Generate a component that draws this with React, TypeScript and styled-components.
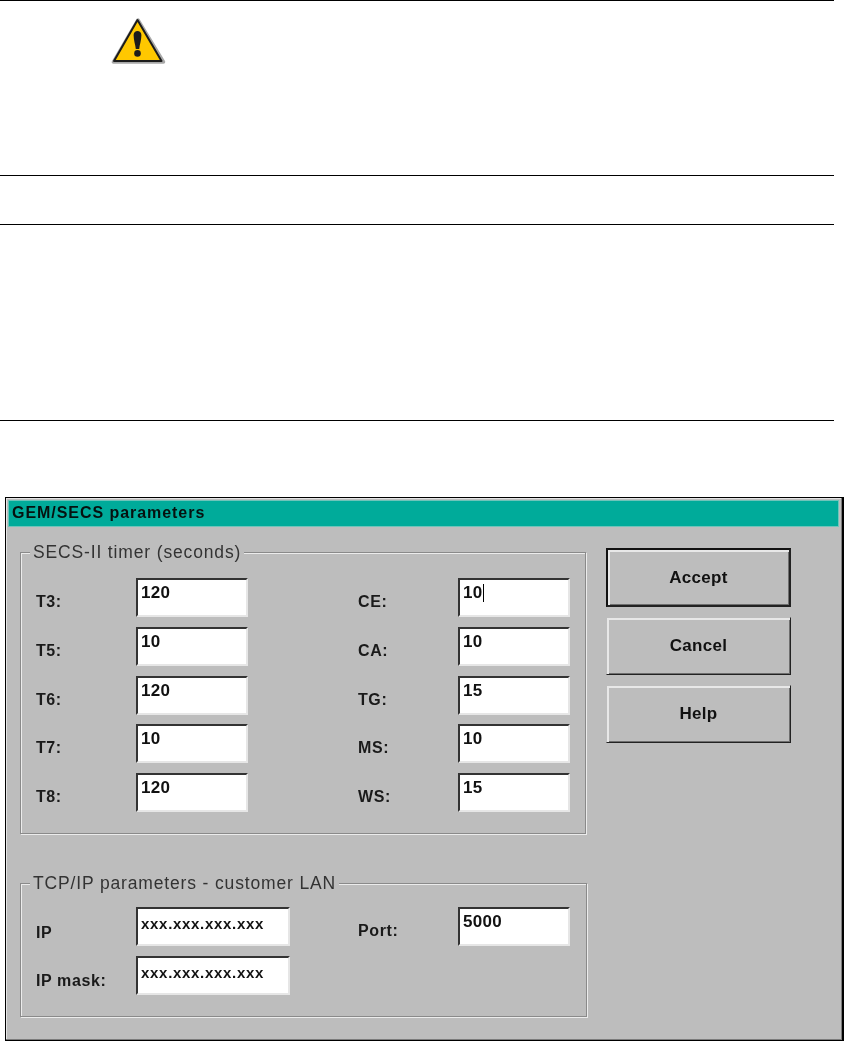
import React from 'react';
import styled, { createGlobalStyle } from 'styled-components';

const Global = createGlobalStyle`
  html, body { margin: 0; padding: 0; background: #fff; }
  body { width: 851px; height: 1041px; overflow: hidden; font-family: "Liberation Sans", Arial, sans-serif; }
`;

const Page = styled.div`
  width: 851px;
  height: 1041px;
  display: flex;
  flex-direction: column;
`;

const Section = styled.div<{ $h: number }>`
  box-sizing: border-box;
  width: 834px;
  height: ${p => p.$h}px;
  border-top: 1px solid #000;
`;

const WarningSection = styled(Section)`
  padding: 14px 0 0 110px;
`;

const DialogWrap = styled.div`
  padding-left: 5px;
`;

const Dialog = styled.div`
  box-sizing: border-box;
  width: 839px;
  height: 544px;
  border: 1px solid #000;
  border-right-width: 2px;
  padding: 2px 3px 2px 2px;
  background: #bdbdbd;
  box-shadow: inset -1px -1px 0 #7b7b7b, inset 1px 1px 0 #e4e4e4;
  color: #111;
  filter: blur(0.35px);
`;

const TitleBar = styled.div`
  box-sizing: border-box;
  height: 27px;
  background: #00ab9a;
  border: 1px solid #6fc4ba;
  padding-left: 3px;
  font-size: 16px;
  font-weight: 700;
  line-height: 24px;
  letter-spacing: 0.95px;
  color: #06110f;
  white-space: nowrap;
`;

const Body = styled.div`
  display: flex;
  gap: 19px;
  padding: 21px 0 0 12px;
`;

const Groups = styled.div`
  display: flex;
  flex-direction: column;
  gap: 49px;
  padding-top: 4px;
`;

const Group = styled.div<{ $w: number; $h: number; $top: number; $gap: number }>`
  position: relative;
  box-sizing: border-box;
  width: ${p => p.$w}px;
  height: ${p => p.$h}px;
  border: 1px solid #8a8a8a;
  box-shadow: 1px 1px 0 #ececec, inset 1px 1px 0 #ececec;
  padding: ${p => p.$top}px 0 0 15px;
  display: flex;
  gap: ${p => p.$gap}px;
`;

const Legend = styled.div`
  position: absolute;
  top: -13px;
  left: 9px;
  padding: 0 3px;
  background: #bdbdbd;
  font-size: 17.5px;
  line-height: 24px;
  letter-spacing: 0.85px;
  color: #333;
  white-space: nowrap;
`;

const Column = styled.div`
  display: flex;
  flex-direction: column;
  gap: 9.75px;
`;

const Field = styled.div`
  display: flex;
  height: 39px;
`;

const Label = styled.div<{ $pt?: number }>`
  width: 100px;
  padding-top: ${p => p.$pt ?? 15}px;
  font-size: 16px;
  font-weight: 700;
  line-height: 18px;
  letter-spacing: 0.6px;
  color: #1a1a1a;
  white-space: nowrap;
`;

const Input = styled.div<{ $w?: number }>`
  box-sizing: border-box;
  width: ${p => p.$w ?? 112}px;
  height: 39px;
  background: #fff;
  border-style: solid;
  border-width: 2px;
  border-color: #333 #e6e6e6 #e6e6e6 #333;
  padding: 4px 0 0 3px;
  font-size: 17px;
  font-weight: 700;
  line-height: 18px;
  letter-spacing: 0.3px;
  color: #111;
  white-space: nowrap;
`;

const Masked = styled.span`
  display: inline-block;
  padding-top: 2px;
  font-size: 15px;
  letter-spacing: 0.7px;
`;

const Caret = styled.span`
  display: inline-block;
  width: 1px;
  height: 18px;
  background: #000;
  vertical-align: top;
`;

const Buttons = styled.div`
  display: flex;
  flex-direction: column;
  gap: 10px;
`;

const Button = styled.div<{ $default?: boolean }>`
  box-sizing: border-box;
  width: 185px;
  height: ${p => (p.$default ? 59 : 58)}px;
  display: flex;
  align-items: center;
  justify-content: center;
  background: #bdbdbd;
  border: ${p => (p.$default ? '2px solid #111' : '1px solid transparent')};
  border-right: ${p => (p.$default ? 2 : 1)}px solid #222;
  border-bottom: ${p => (p.$default ? 2 : 1)}px solid #222;
  box-shadow: inset 2px 2px 0 #e8e8e8, inset -1px -1px 0 #6e6e6e;
  font-size: 17px;
  font-weight: 700;
  letter-spacing: 0.3px;
  color: #111;
`;

const WarningIcon = () => (
  <svg width="56" height="52" viewBox="0 0 56 52" style={{ display: 'block', filter: 'blur(0.35px)' }}>
    <path d="M28 5 L3.5 47 H53.5 Z" fill="none" stroke="#a8a8a8" strokeWidth="3.5" strokeLinejoin="round" />
    <path d="M27.5 5 L4 46 H51.5 Z" fill="#ffc800" stroke="#1c1c1c" strokeWidth="2" strokeLinejoin="round" />
    <path d="M23.6 20 C23.6 14.8 31.4 14.8 31.4 20 C31.4 25 29.6 30 29.2 34 H25.8 C25.4 30 23.6 25 23.6 20 Z" fill="#1c1c1c" />
    <circle cx="27.5" cy="38.4" r="3.3" fill="#1c1c1c" />
  </svg>
);

const timersLeft = [['T3:', '120'], ['T5:', '10'], ['T6:', '120'], ['T7:', '10'], ['T8:', '120']];
const timersRight = [['CE:', '10'], ['CA:', '10'], ['TG:', '15'], ['MS:', '10'], ['WS:', '15']];

export default function App() {
  return (
    <Page>
      <Global />
      <WarningSection $h={175}><WarningIcon /></WarningSection>
      <Section $h={49} />
      <Section $h={196} />
      <Section $h={77} />
      <DialogWrap>
        <Dialog>
          <TitleBar>GEM/SECS parameters</TitleBar>
          <Body>
            <Groups>
              <Group $w={566} $h={282} $top={25} $gap={110}>
                <Legend>SECS-II timer (seconds)</Legend>
                <Column>
                  {timersLeft.map(([l, v]) => (
                    <Field key={l}><Label>{l}</Label><Input>{v}</Input></Field>
                  ))}
                </Column>
                <Column>
                  {timersRight.map(([l, v]) => (
                    <Field key={l}>
                      <Label>{l}</Label>
                      <Input>{v}{l === 'CE:' && <Caret />}</Input>
                    </Field>
                  ))}
                </Column>
              </Group>
              <Group $w={567} $h={134} $top={23} $gap={68}>
                <Legend>TCP/IP parameters - customer LAN</Legend>
                <Column>
                  <Field><Label $pt={17}>IP</Label><Input $w={154}><Masked>xxx.xxx.xxx.xxx</Masked></Input></Field>
                  <Field><Label $pt={16}>IP mask:</Label><Input $w={154}><Masked>xxx.xxx.xxx.xxx</Masked></Input></Field>
                </Column>
                <Column>
                  <Field><Label>Port:</Label><Input>5000</Input></Field>
                </Column>
              </Group>
            </Groups>
            <Buttons>
              <Button $default>Accept</Button>
              <Button>Cancel</Button>
              <Button>Help</Button>
            </Buttons>
          </Body>
        </Dialog>
      </DialogWrap>
    </Page>
  );
}
